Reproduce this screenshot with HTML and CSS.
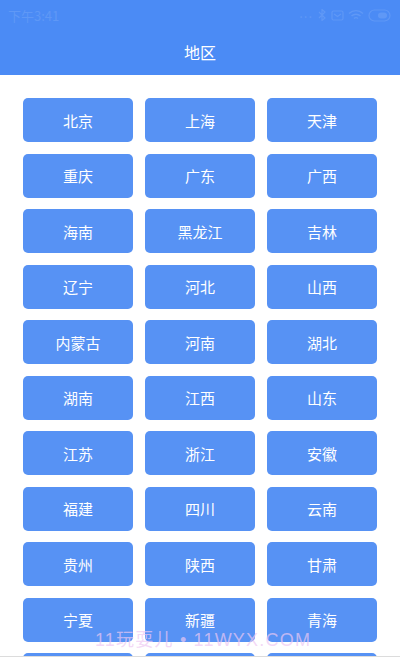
FILE: index.html
```html
<!DOCTYPE html>
<html lang="zh">
<head>
  <meta charset="UTF-8">
  <meta name="viewport" content="width=device-width, initial-scale=1.0">
  <title>地区</title>
  <link rel="stylesheet" href="styles.css">
</head>
<body>
  <header>
    <div class="status">
      <span class="time">下午3:41</span>
      <div class="icons">
        <span class="dots">...</span>
        <svg width="10" height="12" viewBox="0 0 10 12"><path d="M2 3l6 6-3 2.5V.5l3 2.5-6 6" fill="none" stroke="currentColor" stroke-width="1.2"/></svg>
        <svg width="13" height="11" viewBox="0 0 13 11"><rect x="1" y="1" width="11" height="9" rx="1.5" fill="none" stroke="currentColor" stroke-width="1.2"/><path d="M3 4l3.5 2.5L10 4" fill="none" stroke="currentColor" stroke-width="1.2"/></svg>
        <svg width="16" height="12" viewBox="0 0 16 12"><path d="M1 4.5a10 10 0 0 1 14 0M3.5 7a6.5 6.5 0 0 1 9 0M6 9.5a3 3 0 0 1 4 0" fill="none" stroke="currentColor" stroke-width="1.4"/></svg>
        <svg width="24" height="13" viewBox="0 0 24 13"><rect x="1" y="1" width="21" height="11" rx="5.5" fill="none" stroke="currentColor" stroke-width="1.2"/><rect x="10" y="3.5" width="9" height="6" rx="3" fill="currentColor"/></svg>
      </div>
    </div>
    <h1>地区</h1>
  </header>
  <main>
    <ul class="grid">
      <li><button>北京</button></li>
      <li><button>上海</button></li>
      <li><button>天津</button></li>
      <li><button>重庆</button></li>
      <li><button>广东</button></li>
      <li><button>广西</button></li>
      <li><button>海南</button></li>
      <li><button>黑龙江</button></li>
      <li><button>吉林</button></li>
      <li><button>辽宁</button></li>
      <li><button>河北</button></li>
      <li><button>山西</button></li>
      <li><button>内蒙古</button></li>
      <li><button>河南</button></li>
      <li><button>湖北</button></li>
      <li><button>湖南</button></li>
      <li><button>江西</button></li>
      <li><button>山东</button></li>
      <li><button>江苏</button></li>
      <li><button>浙江</button></li>
      <li><button>安徽</button></li>
      <li><button>福建</button></li>
      <li><button>四川</button></li>
      <li><button>云南</button></li>
      <li><button>贵州</button></li>
      <li><button>陕西</button></li>
      <li><button>甘肃</button></li>
      <li><button>宁夏</button></li>
      <li><button>新疆</button></li>
      <li><button>青海</button></li>
      <!-- next row only peeks in under the bottom edge -->
      <li><button></button></li>
      <li><button></button></li>
      <li><button></button></li>
    </ul>
  </main>
  <div class="watermark">11玩耍儿 • 11WYX.COM</div>
  <div class="bottom-bar"></div>
</body>
</html>
```

FILE: styles.css
```css
* {
  margin: 0;
  padding: 0;
  box-sizing: border-box;
}
body {
  width: 400px;
  height: 660px;
  overflow: hidden;
  background: #fff;
  font-family: "Noto Sans CJK SC", "Noto Sans", sans-serif;
}
header {
  height: 75px;
  background: #4b8bf5;
  color: #fff;
}
.status {
  height: 30px;
  padding: 0 8px;
  display: flex;
  justify-content: space-between;
  align-items: center;
  color: #5f98f6;
  font-size: 13px;
}
.icons {
  display: flex;
  align-items: center;
  gap: 4px;
}
.dots {
  letter-spacing: 1px;
  margin-top: -6px;
}
h1 {
  text-align: center;
  font-size: 16px;
  font-weight: normal;
  line-height: 20px;
  margin-top: 12px;
}
main {
  height: 581px;
  overflow: hidden;
}
.grid {
  list-style: none;
  display: grid;
  grid-template-columns: repeat(3, 110px);
  grid-auto-rows: 44px;
  column-gap: 12px;
  row-gap: 11.5px;
  padding: 23px 23px 0;
}
.grid button {
  width: 100%;
  height: 100%;
  border: none;
  border-radius: 5px;
  background: #5792f4;
  color: #fff;
  font-family: inherit;
  font-size: 15px;
}
.watermark {
  position: absolute;
  left: 95px;
  top: 625px;
  font-size: 18px;
  letter-spacing: 1.2px;
  color: rgba(238, 200, 242, 0.7);
  font-family: "Liberation Sans", "Noto Sans CJK SC", sans-serif;
}
.bottom-bar {
  height: 5px;
  border-top: 1px solid #dcdcdc;
  background: #fff;
}
```
